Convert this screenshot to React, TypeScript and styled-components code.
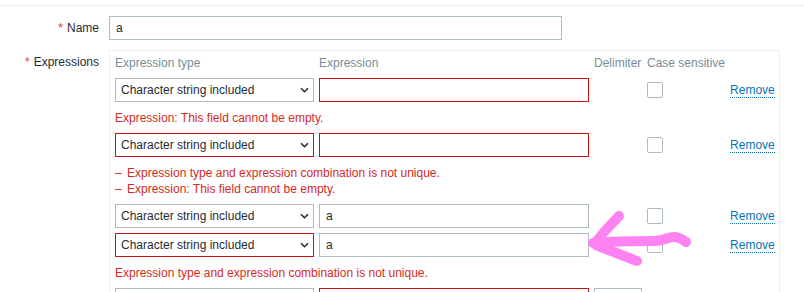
import React from 'react';
import styled, { createGlobalStyle } from 'styled-components';

const GlobalStyle = createGlobalStyle`
  html, body { margin: 0; padding: 0; background: #ffffff; }
  body {
    font-family: "Liberation Sans", Arial, sans-serif;
    font-size: 12px;
    color: #1f2c33;
    overflow: hidden;
  }
  * { box-sizing: border-box; }
`;

const Page = styled.div`
  position: relative;
  height: 292px;
  overflow: hidden;
  padding-top: 5px;
`;

const Form = styled.div`
  border-top: 1px solid #ebeef0;
  padding-top: 10px;
  display: grid;
  grid-template-columns: 99px 671px;
  column-gap: 10px;
  row-gap: 10px;
`;

const Label = styled.div<{ $top?: boolean }>`
  text-align: right;
  line-height: 16px;
  white-space: nowrap;
  align-self: ${(p) => (p.$top ? 'start' : 'center')};
  padding-top: ${(p) => (p.$top ? '4px' : '0')};
`;

const Asterisk = styled.span`
  color: #e33734;
  margin-right: 4px;
`;

const TextInput = styled.input<{ $error?: boolean; $width?: number }>`
  height: 24px;
  width: ${(p) => (p.$width ? `${p.$width}px` : '100%')};
  margin: 0;
  border: 1px solid ${(p) => (p.$error ? '#cc1111' : '#acbbc4')};
  border-radius: 0;
  padding: 0 6px;
  font: inherit;
  color: #1f2c33;
  background: #ffffff;
  outline: none;
`;

const ExprBox = styled.div`
  border: 1px solid #ebeef0;
  border-bottom: none;
  padding: 4px 5px 20px 5px;
  display: grid;
  grid-template-columns: 199px 270px 48px 1fr auto;
  column-gap: 5px;
  row-gap: 5px;
  align-items: center;
`;

const HeadCell = styled.div`
  color: #768d99;
  line-height: 16px;
  padding-bottom: 2px;
  white-space: nowrap;
`;

const SelectBox = styled.div<{ $error?: boolean }>`
  height: 24px;
  border: 1px solid ${(p) => (p.$error ? '#cc1111' : '#acbbc4')};
  background: #ffffff;
  display: flex;
  align-items: center;
  justify-content: space-between;
  padding: 0 4px 0 5px;
  white-space: nowrap;
  color: #1f2c33;
`;

const Chevron = styled.svg`
  width: 9px;
  height: 6px;
  flex: none;
`;

const Empty = styled.div``;

const CheckBox = styled.span`
  display: block;
  width: 16px;
  height: 16px;
  border: 1px solid #acbbc4;
  border-radius: 2px;
  background: #ffffff;
`;

const RemoveLink = styled.a`
  justify-self: end;
  color: #0275b8;
  text-decoration: none;
  line-height: 14px;
  border-bottom: 1px dotted #0275b8;
  cursor: pointer;
`;

const ErrorBlock = styled.div`
  grid-column: 1 / -1;
  color: #d42a25;
  line-height: 16px;
  padding: 3px 0 2px 0;
`;

const ErrorList = styled.ul`
  list-style: none;
  margin: 0;
  padding: 0;
`;

const ErrorItem = styled.li`
  display: flex;
`;

const Dash = styled.span`
  display: inline-block;
  width: 12px;
  flex: none;
`;

const Overlay = styled.svg`
  position: absolute;
  left: 0;
  top: 0;
  width: 804px;
  height: 292px;
  pointer-events: none;
`;

type Row = {
  type: string;
  typeError?: boolean;
  value: string;
  valueError?: boolean;
  delimiter?: string;
  errors?: string[];
};

const rows: Row[] = [
  { type: 'Character string included', value: '', valueError: true, errors: ['Expression: This field cannot be empty.'] },
  {
    type: 'Character string included',
    typeError: true,
    value: '',
    valueError: true,
    errors: ['Expression type and expression combination is not unique.', 'Expression: This field cannot be empty.'],
  },
  { type: 'Character string included', value: 'a' },
  { type: 'Character string included', typeError: true, value: 'a', errors: ['Expression type and expression combination is not unique.'] },
  { type: 'Any character string included', value: '', valueError: true, delimiter: ',' },
];

const Select = ({ value, error }: { value: string; error?: boolean }) => (
  <SelectBox $error={error}>
    <span>{value}</span>
    <Chevron viewBox="0 0 9 6">
      <path d="M1 1.2 L4.5 4.7 L8 1.2" fill="none" stroke="#1f2c33" strokeWidth="1.6" />
    </Chevron>
  </SelectBox>
);

export default function App() {
  return (
    <>
      <GlobalStyle />
      <Page>
        <Form>
          <Label>
            <Asterisk>*</Asterisk>Name
          </Label>
          <TextInput $width={453} defaultValue="a" />

          <Label $top>
            <Asterisk>*</Asterisk>Expressions
          </Label>
          <ExprBox>
            <HeadCell>Expression type</HeadCell>
            <HeadCell>Expression</HeadCell>
            <HeadCell>Delimiter</HeadCell>
            <HeadCell>Case sensitive</HeadCell>
            <HeadCell />
            {rows.map((r, i) => (
              <React.Fragment key={i}>
                <Select value={r.type} error={r.typeError} />
                <TextInput $error={r.valueError} defaultValue={r.value} />
                {r.delimiter !== undefined ? <TextInput defaultValue={r.delimiter} /> : <Empty />}
                <CheckBox />
                <RemoveLink>Remove</RemoveLink>
                {r.errors && r.errors.length === 1 && <ErrorBlock>{r.errors[0]}</ErrorBlock>}
                {r.errors && r.errors.length > 1 && (
                  <ErrorBlock>
                    <ErrorList>
                      {r.errors.map((e) => (
                        <ErrorItem key={e}>
                          <Dash>–</Dash>
                          <span>{e}</span>
                        </ErrorItem>
                      ))}
                    </ErrorList>
                  </ErrorBlock>
                )}
              </React.Fragment>
            ))}
          </ExprBox>
        </Form>
        <Overlay viewBox="0 0 804 292">
          <g fill="none" stroke="#ff82f2" strokeWidth="10" strokeLinecap="round" strokeLinejoin="round">
            <path d="M593 243 C 615 241, 638 241, 654 241 C 664 241, 667 237, 674 237 C 680 237, 683 240, 686 242" />
            <path d="M619 216 Q 606 229 595 243" />
            <path d="M596 245 Q 616 253 637 261" />
          </g>
        </Overlay>
      </Page>
    </>
  );
}
